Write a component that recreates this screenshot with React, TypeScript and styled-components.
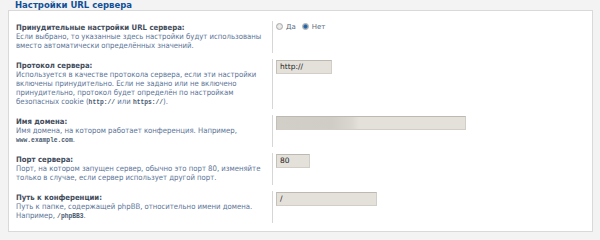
import React from "react";
import styled, { createGlobalStyle } from "styled-components";

const Global = createGlobalStyle`
  html, body { margin: 0; padding: 0; background: #f3f3f3; }
  body { font-family: "DejaVu Sans Condensed", "DejaVu Sans", Verdana, sans-serif; }
  #root { width: 600px; height: 240px; overflow: hidden; }
`;

const Wrap = styled.div`
  padding: 1px 7px 0 8px;
`;

const Legend = styled.div`
  position: relative;
  z-index: 1;
  padding-left: 7px;
  height: 9px;
  line-height: 9px;
  font-family: "DejaVu Sans", Verdana, sans-serif;
  font-size: 8.5px;
  font-weight: bold;
  color: #115098;
  margin-bottom: -0.5px;
`;

const Panel = styled.div`
  background: #ffffff;
  border: 1px solid #d9d9d9;
  height: 222px;
  box-sizing: border-box;
  padding: 10px 8px 0 7px;
  display: flex;
  flex-direction: column;
  gap: 6px;
`;

const Row = styled.div`
  display: grid;
  grid-template-columns: 257px 1fr;
`;

const Term = styled.div`
  border-right: 1px solid #d6d6d6;
  padding: 2px 3px 3px 0;
  font-size: 7.7px;
  line-height: 9px;
`;

const Label = styled.div`
  font-weight: bold;
  color: #434c5c;
`;

const Explain = styled.div`
  color: #5b7497;
`;

const Code = styled.code`
  font-family: "Liberation Mono", "Courier New", monospace;
  font-size: 6.3px;
  line-height: 0;
  font-weight: bold;
  color: #4a5a70;
`;

const Value = styled.div`
  padding: 1px 0 0 3px;
  display: flex;
  align-items: flex-start;
`;

const TextInput = styled.div<{ $w: number; $redacted?: boolean }>`
  width: ${(p) => p.$w}px;
  height: 14px;
  box-sizing: border-box;
  border: 1px solid #d2cec7;
  border-top-color: #bdb9b2;
  border-left-color: #c4c0b9;
  background: ${(p) =>
    p.$redacted
      ? "linear-gradient(90deg, #d2cfc9 0px, #d0cdc7 55px, #dad7d1 75px, #e4e1db 82px, #e4e1db 100%)"
      : "#e4e1db"};
  font-family: "DejaVu Sans", Verdana, sans-serif;
  font-size: 7.5px;
  line-height: 12px;
  padding-left: 3px;
  color: #222;
`;

const Radios = styled.div`
  display: flex;
  align-items: center;
  gap: 6px;
  height: 10px;
`;

const RadioItem = styled.label`
  display: flex;
  align-items: center;
  gap: 3px;
  font-family: "DejaVu Sans", Verdana, sans-serif;
  font-size: 7px;
  color: #5b6b80;
`;

const RadioDot = styled.span<{ $on?: boolean }>`
  width: 7px;
  height: 7px;
  border-radius: 50%;
  box-sizing: border-box;
  border: 1px solid #a9a9a9;
  background: ${(p) =>
    p.$on
      ? "radial-gradient(circle, #1f5fa0 0, #2b6cb0 1.6px, #9ab 2.4px, #e8e8e8 3px)"
      : "radial-gradient(circle, #f2f2f2 0, #dcdcdc 3px)"};
`;

export default function App() {
  return (
    <>
      <Global />
      <Wrap>
        <Legend>Настройки URL сервера</Legend>
        <Panel>
          <Row>
            <Term>
              <Label>Принудительные настройки URL сервера:</Label>
              <Explain>
                Если выбрано, то указанные здесь настройки будут использованы
                вместо автоматически определённых значений.
              </Explain>
            </Term>
            <Value>
              <Radios>
                <RadioItem>
                  <RadioDot />
                  Да
                </RadioItem>
                <RadioItem>
                  <RadioDot $on />
                  Нет
                </RadioItem>
              </Radios>
            </Value>
          </Row>
          <Row>
            <Term>
              <Label>Протокол сервера:</Label>
              <Explain>
                Используется в качестве протокола сервера, если эти настройки
                включены принудительно. Если не задано или не включено
                принудительно, протокол будет определён по настройкам
                безопасных cookie (<Code>http://</Code> или <Code>https://</Code>).
              </Explain>
            </Term>
            <Value>
              <TextInput $w={56}>http://</TextInput>
            </Value>
          </Row>
          <Row>
            <Term>
              <Label>Имя домена:</Label>
              <Explain>
                Имя домена, на котором работает конференция. Например,{" "}
                <Code>www.example.com</Code>.
              </Explain>
            </Term>
            <Value>
              <TextInput $w={190} $redacted />
            </Value>
          </Row>
          <Row>
            <Term>
              <Label>Порт сервера:</Label>
              <Explain>
                Порт, на котором запущен сервер, обычно это порт 80, изменяйте
                только в случае, если сервер использует другой порт.
              </Explain>
            </Term>
            <Value>
              <TextInput $w={34}>80</TextInput>
            </Value>
          </Row>
          <Row>
            <Term>
              <Label>Путь к конференции:</Label>
              <Explain>
                Путь к папке, содержащей phpBB, относительно имени домена.
                Например, <Code>/phpBB3</Code>.
              </Explain>
            </Term>
            <Value>
              <TextInput $w={101}>/</TextInput>
            </Value>
          </Row>
        </Panel>
      </Wrap>
    </>
  );
}
